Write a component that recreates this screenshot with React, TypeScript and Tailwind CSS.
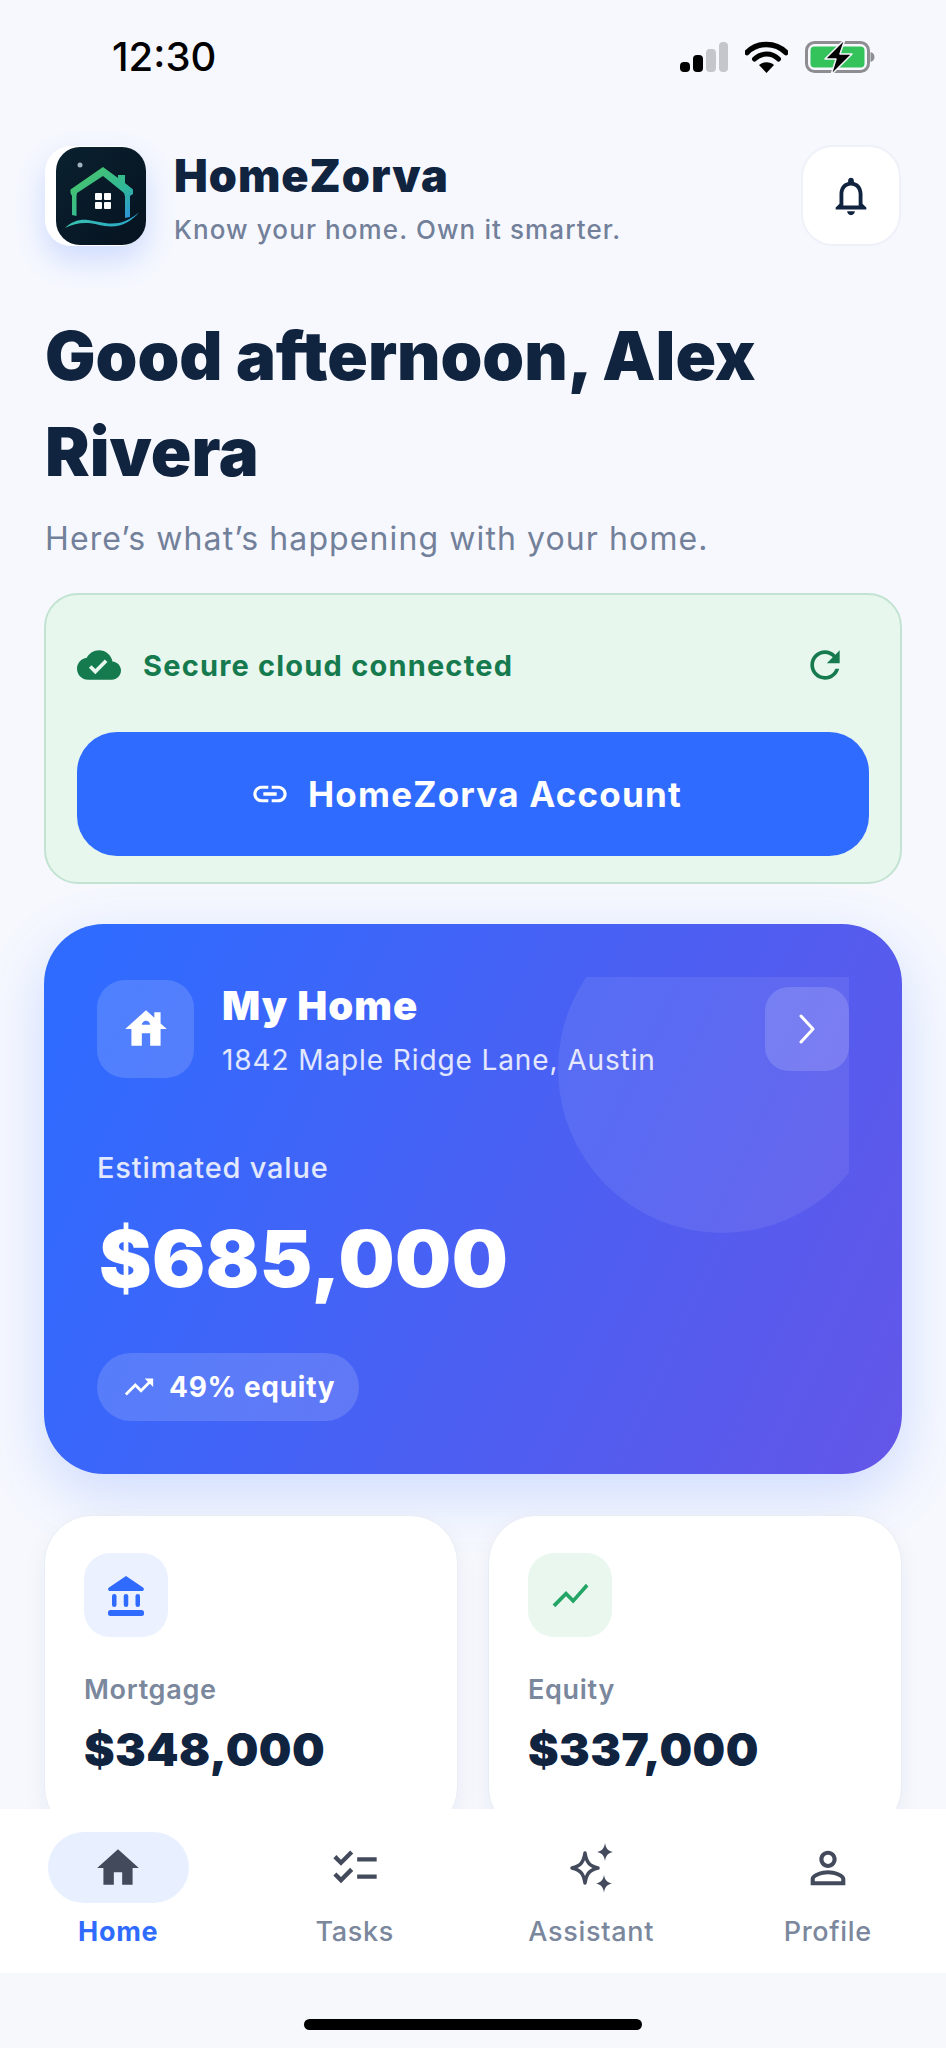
import React from "react";

function Mat({ d, size, className }: { d: string; size: number; className?: string }) {
  return (
    <svg width={size} height={size} viewBox="0 0 24 24" fill="currentColor" className={className}>
      <path d={d} />
    </svg>
  );
}

const P = {
  bell: "M12 22c1.1 0 2-.9 2-2h-4c0 1.1.9 2 2 2zm6-6v-5c0-3.07-1.63-5.64-4.5-6.32V4c0-.83-.67-1.5-1.5-1.5s-1.5.67-1.5 1.5v.68C7.64 5.36 6 7.92 6 11v5l-2 2v1h16v-1l-2-2zm-2 1H8v-6c0-2.48 1.51-4.5 4-4.5s4 2.02 4 4.5v6z",
  cloud: "M19.35 10.04C18.67 6.59 15.64 4 12 4 9.11 4 6.6 5.64 5.35 8.04 2.34 8.36 0 10.91 0 14c0 3.31 2.69 6 6 6h13c2.76 0 5-2.24 5-5 0-2.64-2.05-4.78-4.65-4.96zM10 17l-3.5-3.5 1.41-1.41L10 14.17 15.18 9l1.41 1.41L10 17z",
  refresh: "M17.65 6.35C16.2 4.9 14.21 4 12 4c-4.42 0-7.99 3.58-7.99 8s3.57 8 7.99 8c3.73 0 6.84-2.55 7.73-6h-2.08c-.82 2.33-3.04 4-5.65 4-3.31 0-6-2.69-6-6s2.69-6 6-6c1.66 0 3.14.69 4.22 1.78L13 11h7V4l-2.35 2.35z",
  link: "M3.9 12c0-1.71 1.39-3.1 3.1-3.1h4V7H7c-2.76 0-5 2.24-5 5s2.24 5 5 5h4v-1.9H7c-1.71 0-3.1-1.39-3.1-3.1zM8 13h8v-2H8v2zm9-6h-4v1.9h4c1.71 0 3.1 1.39 3.1 3.1s-1.39 3.1-3.1 3.1h-4V17h4c2.76 0 5-2.24 5-5s-2.24-5-5-5z",
  house: "M19 9.3V4h-3v2.6L12 3 2 12h3v8h5v-6h4v6h5v-8h3l-3-2.7zm-9 .7c0-1.1.9-2 2-2s2 .9 2 2h-4z",
  trend: "M16 6l2.29 2.29-4.88 4.88-4-4L2 16.59 3.41 18l6-6 4 4 6.3-6.29L22 12V6z",
  chart: "M3.5 18.49l6-6.01 4 4L22 6.92l-1.41-1.41-7.09 7.97-4-4L2 16.99z",
  home: "M10 20v-6h4v6h5v-8h3L12 3 2 12h3v8z",
  tasks: "M22 7h-9v2h9V7zm0 8h-9v2h9v-2zM5.54 11L2 7.46l1.41-1.41 2.12 2.12 4.24-4.24 1.41 1.41L5.54 11zm0 8L2 15.46l1.41-1.41 2.12 2.12 4.24-4.24 1.41 1.41L5.54 19z",
  person: "M12 5.9a2.1 2.1 0 1 1 0 4.2 2.1 2.1 0 0 1 0-4.2m0 9c2.97 0 6.1 1.46 6.1 2.1v1.1H5.9V17c0-.64 3.13-2.1 6.1-2.1M12 4C9.79 4 8 5.79 8 8s1.79 4 4 4 4-1.79 4-4-1.79-4-4-4zm0 9c-2.67 0-8 1.34-8 4v3h16v-3c0-2.66-5.33-4-8-4z",
};

function StatusIcons() {
  return (
    <div className="flex items-center">
      <svg width="50" height="32" viewBox="0 0 50 32" className="mr-[16px]">
        <rect x="1" y="21" width="10" height="10" rx="4" fill="#000" />
        <rect x="14" y="14" width="10" height="17" rx="4" fill="#000" />
        <rect x="27" y="8" width="10" height="23" rx="4" fill="#c4c6cb" />
        <rect x="40" y="1" width="9" height="30" rx="4" fill="#c4c6cb" />
      </svg>
      <svg width="43" height="32" viewBox="0 0 43 32" className="mr-[17px]">
        <path d="M2 11.5C7.5 6 14 3.5 21.5 3.5S35.500 6 41 11.500" fill="none" stroke="#000" strokeWidth="5.500" strokeLinecap="round" />
        <path d="M9.500 18C13 14.500 17 13 21.500 13s8.500 1.500 12 5" fill="none" stroke="#000" strokeWidth="5" strokeLinecap="round" />
        <path d="M21.500 32l-7.500-8c2-1.800 4.500-2.800 7.500-2.800s5.500 1 7.500 2.800z" fill="#000" />
      </svg>
      <svg width="70" height="36" viewBox="0 0 70 36">
        <rect x="1.500" y="3.500" width="62" height="29" rx="8" fill="none" stroke="#8e8e92" strokeWidth="3" />
        <rect x="5.500" y="7.500" width="54" height="21" rx="4" fill="#34c25a" />
        <path d="M65.500 13c2.500.5 4 2.500 4 5s-1.500 4.500-4 5z" fill="#8e8e92" />
        <path d="M40 0L20 20h11l-5 16 21-21H35z" fill="#000" stroke="#f6f8fe" strokeWidth="1.500" strokeLinejoin="round" />
      </svg>
    </div>
  );
}

function Logo() {
  return (
    <div className="h-[100px] w-[101px] shrink-0 rounded-[26px] bg-white flex justify-end items-center shadow-[0_14px_30px_rgba(47,107,255,0.2)]">
      <svg width="90" height="98" viewBox="0 0 90 98" className="rounded-[24px]">
        <defs>
          <linearGradient id="logoBg" x1="0" y1="0" x2="1" y2="1">
            <stop offset="0" stopColor="#0a2130" />
            <stop offset="1" stopColor="#06121f" />
          </linearGradient>
          <linearGradient id="logoHouse" x1="0" y1="0" x2="1" y2="1">
            <stop offset="0" stopColor="#4fc75f" />
            <stop offset="0.65" stopColor="#2fb79a" />
            <stop offset="1" stopColor="#2d8fe0" />
          </linearGradient>
          <linearGradient id="logoWave" x1="0" y1="0" x2="1" y2="0">
            <stop offset="0" stopColor="#38c4b0" />
            <stop offset="1" stopColor="#2aa3c8" />
          </linearGradient>
        </defs>
        <rect width="90" height="98" fill="url(#logoBg)" />
        <circle cx="24" cy="18" r="2.500" fill="#9fb2bd" />
        <path
          d="M16 49l-1.500-3v-3.500L47 20l15 11v-3h7v8l8 6.500V47l-3 2v21l-5 1V49.500l-1-3.500L47 29 21 46l-.500 3v20l-4.500-1z"
          fill="url(#logoHouse)"
        />
        <rect x="39" y="46" width="7" height="7" rx="1" fill="#fff" />
        <rect x="48" y="46" width="7" height="7" rx="1" fill="#fff" />
        <rect x="39" y="55" width="7" height="7" rx="1" fill="#fff" />
        <rect x="48" y="55" width="7" height="7" rx="1" fill="#fff" />
        <path
          d="M9 81c7-7 15-9 23-8 8 .8 14 3.500 24 3.500 9 0 17-3 27-11-7 8-16 14-28 14-9 0-15-3-23-3.500-8-.5-15 1-23 5z"
          fill="url(#logoWave)"
        />
      </svg>
    </div>
  );
}

function Stat({ icon, bg, label, value }: { icon: React.ReactNode; bg: string; label: string; value: string }) {
  return (
    <div className="h-[320px] rounded-[48px] bg-white border border-[#e9edf5] shadow-[0_8px_24px_rgba(16,35,63,0.05)] px-[39px] pt-[37px]">
      <div className={`h-[84px] w-[84px] rounded-[26px] flex items-center justify-center ${bg}`}>{icon}</div>
      <div className="mt-[37px] text-[27px] leading-[32px] font-semibold tracking-[0.7px] text-[#7a879c]">{label}</div>
      <div className="mt-[15px] text-[46px] leading-[56px] font-black tracking-[0.4px] text-[#10233f]">{value}</div>
    </div>
  );
}

function Tab({ label, active, icon }: { label: string; active?: boolean; icon: React.ReactNode }) {
  return (
    <div className="flex flex-col items-center">
      <div className={`h-[71px] w-[141px] rounded-[36px] flex items-center justify-center text-[#434a5c] ${active ? "bg-[#e8f0ff]" : ""}`}>
        {icon}
      </div>
      <div className={`mt-[12px] text-[27px] leading-[34px] tracking-[0.7px] ${active ? "font-bold text-[#2f6bff]" : "font-medium text-[#7a879c]"}`}>
        {label}
      </div>
    </div>
  );
}

export default function App() {
  return (
    <div className="h-[2048px] w-[946px] overflow-hidden flex flex-col bg-[#f6f8fe] font-['Inter',sans-serif]">
      <div className="flex-1 min-h-0 overflow-hidden">
        <div className="h-[145px] pl-[112px] pr-[71px] pb-[32px] flex items-center justify-between">
          <div className="text-[40px] leading-none font-medium text-black">12:30</div>
          <StatusIcons />
        </div>

        <div className="px-[44px]">
          <div className="flex items-center justify-between h-[101px] px-[1px]">
            <div className="flex items-center">
              <Logo />
              <div className="ml-[28px] pt-[6px]">
                <div className="text-[45px] leading-[50px] font-black tracking-[1px] text-[#10233f]">HomeZorva</div>
                <div className="mt-[12px] text-[26px] leading-[34px] font-medium tracking-[1.1px] text-[#73809a]">
                  Know your home. Own it smarter.
                </div>
              </div>
            </div>
            <div className="h-[101px] w-[100px] rounded-[32px] bg-white border-2 border-[#eef1f8] flex items-center justify-center text-[#10233f]">
              <Mat d={P.bell} size={46} />
            </div>
          </div>

          <h1 className="mt-[62px] pl-[1px] text-[67px] leading-[96px] font-black text-[#10233f]">
            Good afternoon, Alex
            <br />
            Rivera
          </h1>
          <p className="mt-[17px] pl-[1px] text-[32px] leading-[44px] tracking-[1.1px] text-[#73809a]">
            Here’s what’s happening with your home.
          </p>

          <div className="mt-[32px] h-[291px] rounded-[34px] bg-[#e8f7ee] border-2 border-[#c3e3d2] px-[31px] pt-[48px]">
            <div className="flex items-center h-[44px] pr-[22px]">
              <Mat d={P.cloud} size={44} className="text-[#167a4f]" />
              <span className="ml-[22px] text-[29px] leading-none font-bold tracking-[1.2px] text-[#167a4f]">Secure cloud connected</span>
              <Mat d={P.refresh} size={44} className="ml-auto text-[#167a4f]" />
            </div>
            <div className="mt-[45px] h-[124px] rounded-[40px] bg-[#2f6bff] flex items-center justify-center pr-[14px] text-white">
              <Mat d={P.link} size={40} />
              <span className="ml-[18px] text-[35px] leading-none font-bold tracking-[1.2px]">HomeZorva Account</span>
            </div>
          </div>

          <div className="mt-[40px] h-[550px] rounded-[60px] bg-[linear-gradient(115deg,#2f6bff_5%,#6356e8_100%)] shadow-[0_20px_60px_rgba(47,107,255,0.2)] p-[53px]">
            <div className="relative h-[445px] overflow-hidden -mb-[445px]">
              <div className="absolute left-[461px] -top-[72px] h-[328px] w-[328px] rounded-full bg-white/[0.08]" />
            </div>
            <div className="relative pt-[3px]">
              <div className="flex items-start">
                <div className="h-[98px] w-[97px] rounded-[28px] bg-white/15 flex items-center justify-center text-white">
                  <Mat d={P.house} size={50} />
                </div>
                <div className="ml-[28px] pt-[1px]">
                  <div className="text-[40px] leading-[50px] font-black tracking-[1px] text-white">My Home</div>
                  <div className="mt-[9px] text-[28px] leading-[40px] tracking-[0.9px] text-white/85">1842 Maple Ridge Lane, Austin</div>
                </div>
                <div className="ml-auto mt-[7px] h-[84px] w-[84px] rounded-[24px] bg-white/15 flex items-center justify-center">
                  <svg width="40" height="40" viewBox="0 0 40 40" fill="none" stroke="#fff" strokeWidth="3" strokeLinecap="round" strokeLinejoin="round">
                    <path d="M14 7l12 13-12 13" />
                  </svg>
                </div>
              </div>
              <div className="mt-[70px] text-[29px] leading-[36px] font-medium tracking-[0.8px] text-white/85">Estimated value</div>
              <div className="mt-[24px] pl-[2px] text-[79px] leading-[96px] font-black tracking-[0.4px] text-white">$685,000</div>
              <div className="mt-[47px] h-[68px] w-[262px] rounded-[34px] bg-white/15 flex items-center pl-[25px] text-white">
                <Mat d={P.trend} size={34} />
                <span className="ml-[13px] text-[28px] leading-none font-bold tracking-[0.7px]">49% equity</span>
              </div>
            </div>
          </div>

          <div className="mt-[41px] grid grid-cols-2 gap-[30px]">
            <Stat
              bg="bg-[#ebf1ff]"
              label="Mortgage"
              value="$348,000"
              icon={
                <svg width="38" height="40" viewBox="0 0 38 40" fill="#2f6bff" className="mt-[2px]">
                  <path d="M19 0L36 11.500c1.500 1 1 3.500-1 3.500H3C1 15 .5 12.500 2 11.500z" />
                  <rect x="5" y="18" width="4.500" height="13" rx="2.250" />
                  <rect x="16.750" y="18" width="4.500" height="13" rx="2.250" />
                  <rect x="28.500" y="18" width="4.500" height="13" rx="2.250" />
                  <rect x="1" y="34" width="36" height="6" rx="2.500" />
                </svg>
              }
            />
            <Stat
              bg="bg-[#e9f7ef]"
              label="Equity"
              value="$337,000"
              icon={<Mat d={P.chart} size={43} className="text-[#22a565]" />}
            />
          </div>
        </div>
      </div>

      <nav className="h-[164px] shrink-0 bg-white grid grid-cols-4 pt-[23px] pb-0">
        <Tab label="Home" active icon={<Mat d={P.home} size={50} />} />
        <Tab label="Tasks" icon={<Mat d={P.tasks} size={52} />} />
        <Tab
          label="Assistant"
          icon={
            <svg width="50" height="52" viewBox="0 0 50 52" fill="none">
              <path d="M19 11c1.500 9 4 13 13 15-9 2-11.500 6-13 15-1.500-9-4-13-13-15 9-2 11.500-6 13-15z" stroke="#434a5c" strokeWidth="3.500" strokeLinejoin="round" />
              <path d="M39 1c1 5.500 2.500 7.500 8 9-5.500 1.500-7 3.500-8 9-1-5.500-2.500-7.500-8-9 5.500-1.500 7-3.500 8-9z" fill="#434a5c" />
              <path d="M38 33c1 5 2.500 7 8 8.500-5.500 1.500-7 3.500-8 9-1-5.500-2.500-7.500-8-9 5.500-1.500 7-3.500 8-8.500z" fill="#434a5c" />
            </svg>
          }
        />
        <Tab label="Profile" icon={<Mat d={P.person} size={52} />} />
      </nav>

      <div className="h-[75px] shrink-0 bg-[#f6f8fb] flex justify-center pt-[46px]">
        <div className="h-[11px] w-[338px] rounded-full bg-black" />
      </div>
    </div>
  );
}
